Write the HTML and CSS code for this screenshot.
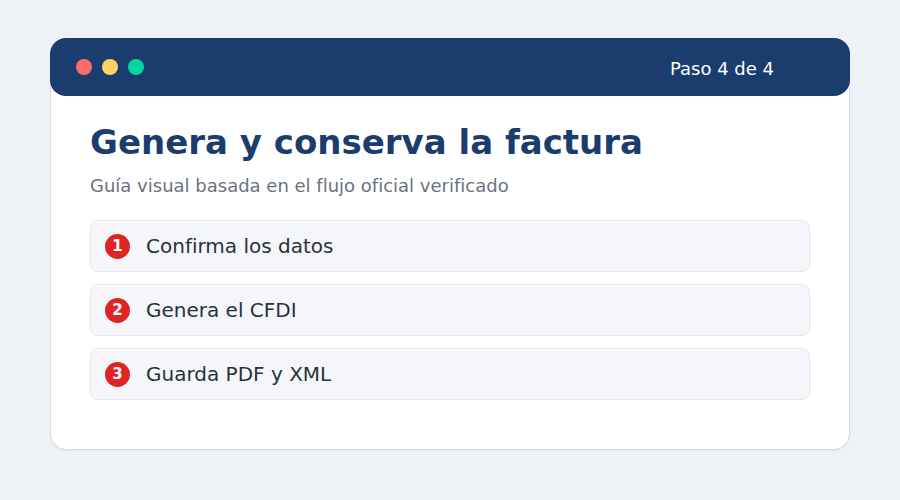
FILE: index.html
```html
<!DOCTYPE html>
<html lang="es">
<head>
<meta charset="utf-8">
<link rel="stylesheet" href="styles.css">
</head>
<body>
<div class="card">
  <div class="bar">
    <div class="dots">
      <span class="dot red"></span>
      <span class="dot yellow"></span>
      <span class="dot green"></span>
    </div>
    <div class="step">Paso 4 de 4</div>
  </div>
  <div class="content">
    <h1 class="title">Genera y conserva la factura</h1>
    <p class="subtitle">Guía visual basada en el flujo oficial verificado</p>
    <ul class="list">
      <li class="item"><span class="num">1</span><span class="label">Confirma los datos</span></li>
      <li class="item"><span class="num">2</span><span class="label">Genera el CFDI</span></li>
      <li class="item"><span class="num">3</span><span class="label">Guarda PDF y XML</span></li>
    </ul>
  </div>
</div>
</body>
</html>
```
FILE: styles.css
```css
html, body {
  margin: 0;
  padding: 0;
}
body {
  background: #eef1f5;
  font-family: "DejaVu Sans", sans-serif;
  width: 900px;
  height: 500px;
  padding-top: 38px;
  box-sizing: border-box;
}
.card {
  margin: 0 50px;
  height: 412px;
  background: #ffffff;
  border: 1px solid #d5dae1;
  border-radius: 16px;
  box-sizing: border-box;
  box-shadow: 0 1px 2px rgba(0,0,0,0.04);
}
.bar {
  margin: -1px -1px 0 -1px;
  height: 58px;
  background: #1a3d6e;
  border-radius: 16px;
  display: flex;
  align-items: center;
  justify-content: space-between;
  padding: 0 76px 0 26px;
}
.dots {
  display: flex;
  gap: 10px;
}
.dot {
  width: 16px;
  height: 16px;
  border-radius: 50%;
  display: block;
}
.red { background: #ff6b6b; }
.yellow { background: #ffd166; }
.green { background: #06d6a0; }
.step {
  color: #ffffff;
  font-size: 18px;
  line-height: 22px;
  padding-top: 3px;
}
.content {
  padding: 25px 39px 0 39px;
}
.title {
  margin: 0;
  font-size: 34px;
  font-weight: bold;
  color: #1a3d6e;
  line-height: 42px;
}
.subtitle {
  margin: 12px 0 0 0;
  font-size: 18px;
  color: #6b7280;
  line-height: 22px;
}
.list {
  list-style: none;
  margin: 23px 0 0 0;
  padding: 0;
  display: flex;
  flex-direction: column;
  gap: 12px;
}
.item {
  height: 52px;
  box-sizing: border-box;
  background: #f4f6fa;
  border: 1px solid #e4e8ee;
  border-radius: 8px;
  display: flex;
  align-items: center;
  padding-left: 14px;
}
.num {
  width: 25px;
  height: 25px;
  border-radius: 50%;
  background: #e02424;
  color: #ffffff;
  font-weight: bold;
  font-size: 15px;
  display: flex;
  align-items: center;
  justify-content: center;
  flex: none;
}
.label {
  margin-left: 16px;
  font-size: 20px;
  color: #2b313c;
}
```
